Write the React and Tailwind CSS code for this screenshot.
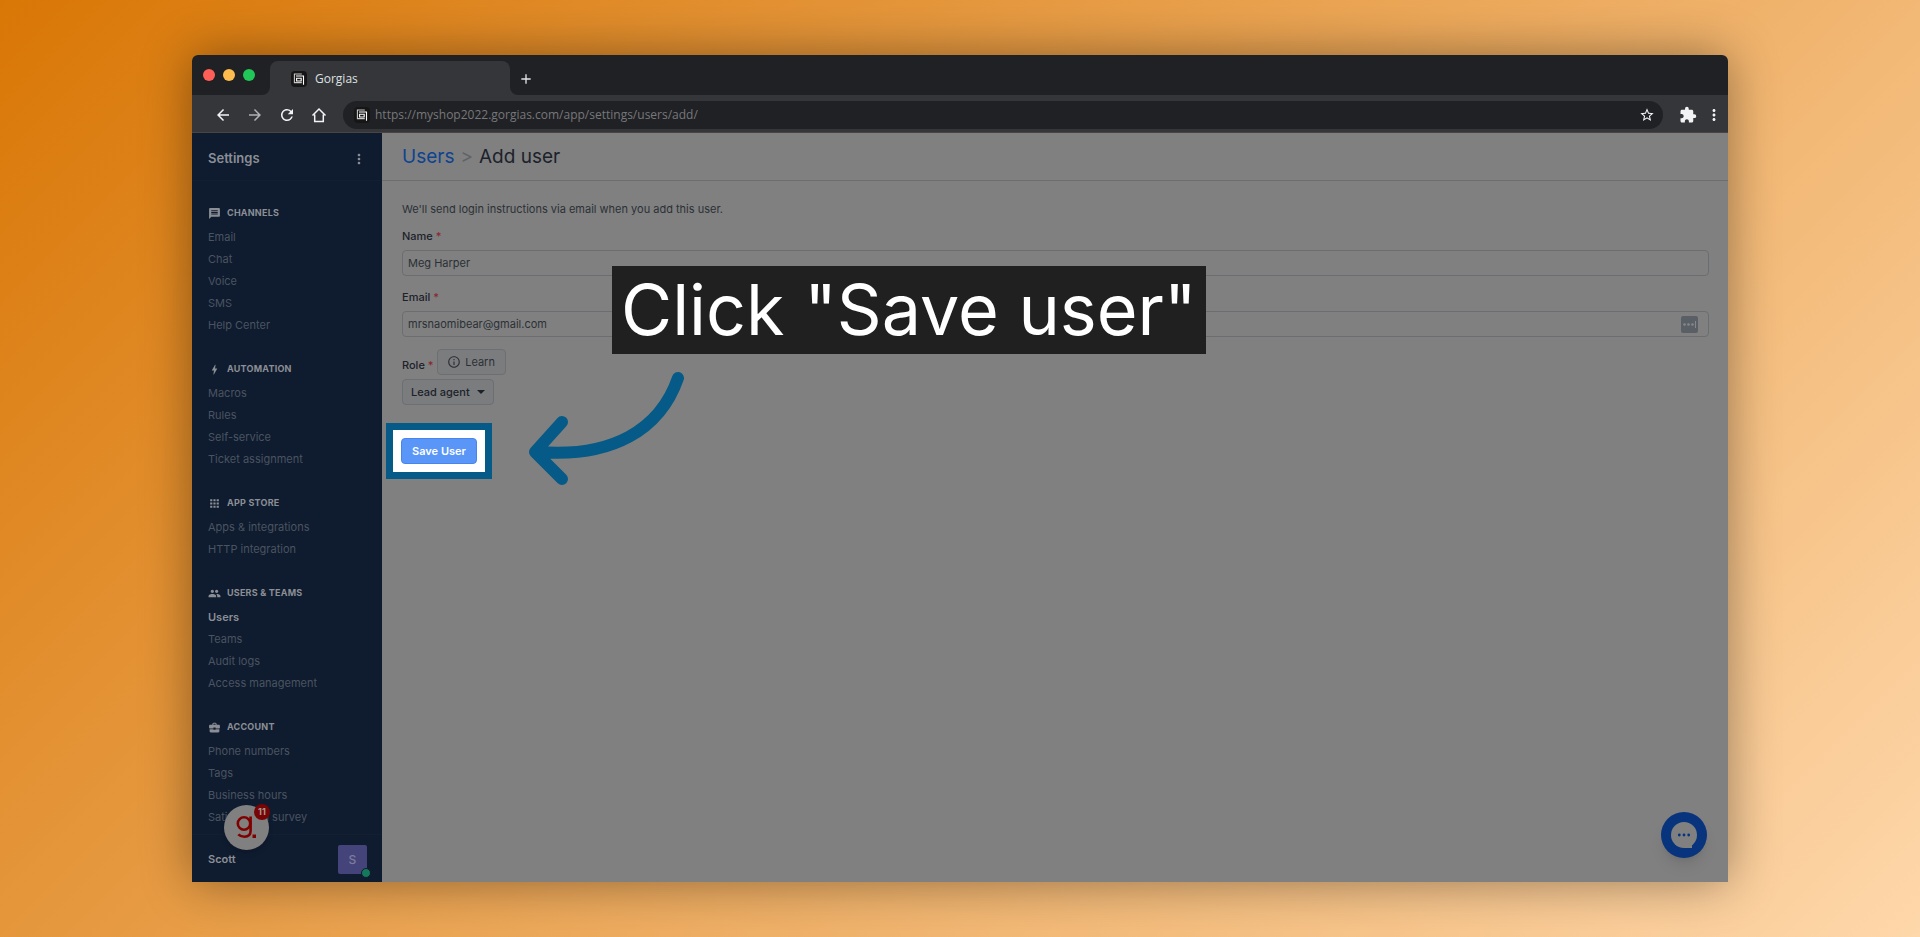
import React from "react";
import {
  MdAdd,
  MdApps,
  MdArrowBack,
  MdArrowForward,
  MdBolt,
  MdBusinessCenter,
  MdExtension,
  MdMessage,
  MdMoreVert,
  MdOutlineInfo,
  MdPeople,
  MdRefresh,
  MdStarOutline,
} from "react-icons/md";

const sections = [
  {
    title: "CHANNELS",
    icon: MdMessage,
    items: ["Email", "Chat", "Voice", "SMS", "Help Center"],
  },
  {
    title: "AUTOMATION",
    icon: MdBolt,
    items: ["Macros", "Rules", "Self-service", "Ticket assignment"],
  },
  {
    title: "APP STORE",
    icon: MdApps,
    items: ["Apps & integrations", "HTTP integration"],
  },
  {
    title: "USERS & TEAMS",
    icon: MdPeople,
    items: ["Users", "Teams", "Audit logs", "Access management"],
  },
  {
    title: "ACCOUNT",
    icon: MdBusinessCenter,
    items: ["Phone numbers", "Tags", "Business hours", "Satisfaction survey"],
  },
];

const Favicon = () => (
  <svg viewBox="0 0 16 16" className="w-4 h-4 shrink-0">
    <rect width="16" height="16" rx="4" fill="#161616" />
    <path
      d="M10.8 3H3.4v8.6h7.4"
      fill="none"
      stroke="#c8c8c8"
      strokeWidth="1.1"
    />
    <path
      d="M5 5h7.5v8.8M5.6 7.2h4.6V10H5.6z"
      fill="none"
      stroke="#fff"
      strokeWidth="1.1"
    />
  </svg>
);

const HomeIcon = () => (
  <svg viewBox="0 0 18 18" className="w-[18px] h-[18px]">
    <path
      d="M2.5 9.5 9 3l6.5 6.500M4.700 8.500v7h8.600v-7"
      fill="none"
      stroke="currentColor"
      strokeWidth="1.5"
    />
  </svg>
);

const TitleBar = () => (
  <div className="h-10 bg-[#202124] flex items-end pl-[11px]">
    <div className="h-10 flex items-center gap-2">
      <span className="w-3 h-3 rounded-full bg-[#ff5f57]" />
      <span className="w-3 h-3 rounded-full bg-[#febc4f]" />
      <span className="w-3 h-3 rounded-full bg-[#21c757]" />
    </div>
    <div className="relative ml-[15px] w-[240px] h-[34px] bg-[#35363a] rounded-t-lg flex items-center gap-2 pl-[21px] pt-px">
      <span className="absolute -left-2 bottom-0 w-2 h-2 rounded-br-lg shadow-[2px_2px_0_2px_#35363a]" />
      <span className="absolute -right-2 bottom-0 w-2 h-2 rounded-bl-lg shadow-[-2px_2px_0_2px_#35363a]" />
      <Favicon />
      <span className="text-[12px] text-[#dfe0e2]">Gorgias</span>
    </div>
    <button aria-label="New tab" className="ml-2 mb-2 text-[#e3e4e6]">
      <MdAdd className="w-4 h-4" />
    </button>
  </div>
);

const Toolbar = () => (
  <div className="relative h-[38px] pt-[2px] bg-[#35363a] flex items-center pl-[22px] pr-[5px] text-[#f1f3f4] border-b border-[#4a4541]">
    <div className="flex items-center gap-[14px]">
      <button aria-label="Back">
        <MdArrowBack className="w-[18px] h-[18px]" />
      </button>
      <button aria-label="Forward" className="text-[#b0b1b4]">
        <MdArrowForward className="w-[18px] h-[18px]" />
      </button>
      <button aria-label="Reload">
        <MdRefresh className="w-[18px] h-[18px]" />
      </button>
      <button aria-label="Home">
        <HomeIcon />
      </button>
    </div>
    <div className="ml-[15px] flex-1 h-7 rounded-full bg-[#202124] flex items-center pl-[11px] pr-2">
      <Favicon />
      <input
        aria-label="Address"
        readOnly
        defaultValue="https://myshop2022.gorgias.com/app/settings/users/add/"
        className="ml-[5px] flex-1 min-w-0 bg-transparent text-[12px] text-[#77787b] outline-none"
      />
      <button aria-label="Bookmark">
        <MdStarOutline className="w-4 h-4" />
      </button>
    </div>
    <MdExtension className="ml-4 w-[18px] h-[18px]" />
    <button aria-label="Browser menu" className="ml-2">
      <MdMoreVert className="w-[18px] h-[18px]" />
    </button>
  </div>
);

const Sidebar = () => (
  <aside className="relative w-[190px] shrink-0 bg-[#0f1b2f] flex flex-col text-[#8b8f95]">
    <div className="h-12 pt-1 pl-4 pr-[15px] flex items-center justify-between border-b border-[#131e30]">
      <h2 className="text-[13px] font-semibold">Settings</h2>
      <button aria-label="Settings menu">
        <MdMoreVert className="w-4 h-4" />
      </button>
    </div>
    <nav className="flex-1 pt-6 pl-4">
      {sections.map(({ title, icon: Icon, items }) => (
        <section key={title} className="mb-[25px] last:mb-0">
          <h3 className="h-4 mb-[5px] flex items-center gap-[6px] text-[9px] font-bold tracking-wide">
            <Icon className="w-[13px] h-[13px]" />
            {title}
          </h3>
          <ul>
            {items.map((item) => (
              <li key={item} className="h-[22px] flex items-center text-[11px]">
                <a
                  href="#"
                  className={
                    item === "Users"
                      ? "font-semibold text-[#8b8f95]"
                      : "text-[#4a5460]"
                  }
                >
                  {item}
                </a>
              </li>
            ))}
          </ul>
        </section>
      ))}
    </nav>
    <div className="h-12 pt-[2px] pl-4 pr-[15px] flex items-center justify-between border-t border-[#131e30]">
      <span className="text-[11px] font-semibold">Scott</span>
      <div className="relative w-[29px] h-[29px] rounded-xs bg-[#44447a] flex items-center justify-center text-[12px] font-medium text-[#7c7c9c]">
        S
        <span className="absolute -right-1 -bottom-1 w-[10px] h-[10px] rounded-full bg-[#14785a] border border-[#0f1b2f]" />
      </div>
    </div>
    <button
      aria-label="Open guide, 11 new"
      className="absolute left-8 bottom-8 w-[45px] h-[45px] rounded-full bg-[#808080] shadow-md"
    >
      <svg viewBox="0 0 45 45" className="w-full h-full">
        <g fill="none" stroke="#800000" strokeWidth="2.6">
          <circle cx="20" cy="18.5" r="6.2" />
          <path d="M26.6 11.5v14.3q0 5.9-6.1 5.9-3.8 0-6.2-2.4" />
        </g>
        <rect x="28.5" y="29.5" width="3.5" height="3.5" fill="#800000" />
      </svg>
      <span className="absolute -top-px -right-px w-4 h-4 rounded-full bg-[#780505] flex items-center justify-center text-[9px] font-bold text-[#a59a9a]">
        11
      </span>
    </button>
  </aside>
);

const Required = () => <span className="ml-[3px] text-[#8a2530]">*</span>;

const UserForm = () => (
  <form className="pl-5 pr-[19px] pt-5 text-[11px] text-[#2b3036]">
    <p className="h-4 leading-4">
      We'll send login instructions via email when you add this user.
    </p>

    <label
      htmlFor="name"
      className="mt-[11px] h-4 leading-4 flex font-medium text-[#1c222b]"
    >
      Name <Required />
    </label>
    <input
      id="name"
      defaultValue="Meg Harper"
      className="mt-[6px] block w-full h-[26px] px-[5px] rounded-sm border border-[#6c6d70] bg-transparent"
    />

    <label
      htmlFor="email"
      className="mt-[13px] h-4 leading-4 flex font-medium text-[#1c222b]"
    >
      Email <Required />
    </label>
    <div className="mt-[6px] h-[26px] flex items-center pr-[10px] rounded-sm border border-[#6c6d70]">
      <input
        id="email"
        type="email"
        defaultValue="mrsnaomibear@gmail.com"
        className="flex-1 min-w-0 px-[5px] bg-transparent"
      />
      <svg viewBox="0 0 17 17" className="w-[17px] h-[17px]">
        <rect width="17" height="17" rx="2" fill="#5a5f66" />
        <g fill="#85888c">
          <circle cx="3.5" cy="8.5" r="1.3" />
          <circle cx="7.5" cy="8.5" r="1.3" />
          <circle cx="11.5" cy="8.5" r="1.3" />
          <rect x="14" y="5" width="1" height="7" />
        </g>
      </svg>
    </div>

    <div className="mt-3 flex items-end">
      <label htmlFor="role" className="mb-[2px] font-medium text-[#1c222b]">
        Role <span className="text-[#8a2530]">*</span>
      </label>
      <button
        type="button"
        className="ml-[3px] w-[69px] h-[26px] rounded-sm border border-[#6c6f73] bg-[#7b7c7e] flex items-center justify-center gap-1"
      >
        <MdOutlineInfo className="w-[14px] h-[14px]" />
        Learn
      </button>
    </div>
    <div className="relative mt-1 w-[92px]">
      <select
        id="role"
        className="w-full h-[26px] pl-2 appearance-none rounded-sm border border-[#6c6f73] bg-[#7b7c7e] font-medium text-[#1c222b]"
      >
        <option>Lead agent</option>
      </select>
      <svg
        viewBox="0 0 8 4"
        className="absolute right-[9px] top-[11px] w-2 h-1 pointer-events-none"
      >
        <path d="M0 0h8L4 4z" fill="#1c222b" />
      </svg>
    </div>

    <div className="mt-[18px] -ml-4 w-[106px] border-[7px] border-[#055a87] bg-white p-2">
      <button
        type="button"
        className="block w-full h-[26px] rounded-sm border border-[#4884ec] bg-[#5a95f8] font-semibold text-white"
      >
        Save User
      </button>
    </div>
  </form>
);

const Callout = () => (
  <>
    <div className="absolute left-[230px] top-[133px] h-[88px] px-[9px] bg-[#202020] text-white text-[70px] leading-[88px] whitespace-nowrap">
      Click "Save user"
    </div>
    <svg
      viewBox="0 0 160 120"
      className="absolute left-[144px] top-[235px] w-[160px] h-[120px]"
    >
      <path
        d="M152 10C134 62 86 90 12 84M36 54L9 84l27 27"
        fill="none"
        stroke="#055a87"
        strokeWidth="12"
        strokeLinecap="round"
        strokeLinejoin="round"
      />
    </svg>
  </>
);

const ChatButton = () => (
  <button
    aria-label="Open chat"
    className="absolute right-[21px] bottom-6 w-[46px] h-[46px] rounded-full bg-[#07347d] shadow-lg"
  >
    <svg viewBox="0 0 46 46" className="w-full h-full">
      <circle cx="23" cy="23" r="13" fill="#808080" />
      <path d="M23 30h8v6h-8z" fill="#808080" />
      <g fill="#07347d">
        <circle cx="18.3" cy="23" r="1.4" />
        <circle cx="23" cy="23" r="1.4" />
        <circle cx="27.7" cy="23" r="1.4" />
      </g>
    </svg>
  </button>
);

export default function App() {
  return (
    <div className="min-h-screen flex flex-col px-[10%] py-[55px] bg-linear-[135deg,#d97706,#fed7aa] font-['Inter',sans-serif]">
      <div className="flex-1 flex flex-col rounded-t-md overflow-hidden shadow-[0_0_50px_rgba(0,0,0,0.4)]">
        <div className="font-['Open_Sans',sans-serif]">
          <TitleBar />
          <Toolbar />
        </div>
        <div className="flex-1 flex">
          <Sidebar />
          <main className="relative flex-1 bg-[#808080]">
            <header className="h-12 pt-[2px] pl-5 flex items-center gap-[6px] border-b border-[#6d6e70] text-[19px]">
              <a href="#" className="text-[#0d4390]">
                Users
              </a>
              <span className="text-[#5f6367]">&gt;</span>
              <h1 className="text-[#1c222b]">Add user</h1>
            </header>
            <UserForm />
            <Callout />
            <ChatButton />
          </main>
        </div>
      </div>
    </div>
  );
}
